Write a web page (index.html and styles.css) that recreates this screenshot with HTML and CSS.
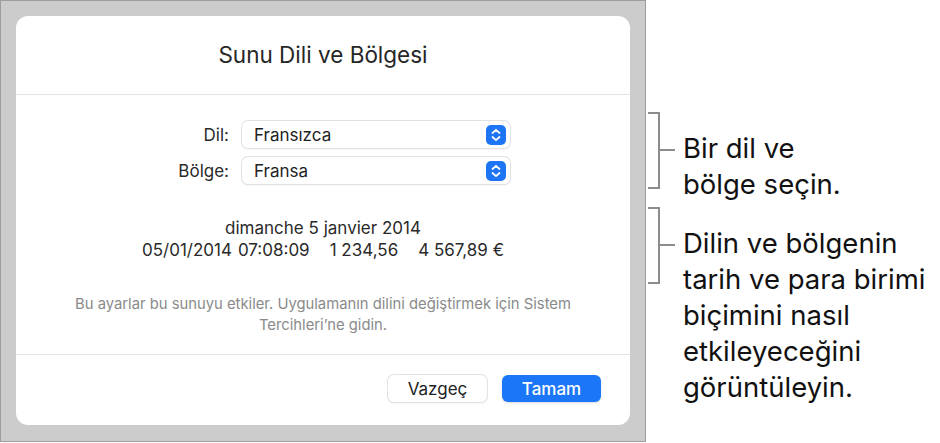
FILE: index.html
```html
<!DOCTYPE html>
<html lang="tr">
<head>
    <meta charset="UTF-8">
    <title>Sunu Dili ve Bölgesi</title>
    <link rel="stylesheet" href="styles.css">
</head>
<body>
    <div class="page">
        <div class="frame">
            <div class="dialog">
                <div class="dialog-head">Sunu Dili ve Bölgesi</div>

                <div class="fields">
                    <label class="field-label">Dil:</label>
                    <div class="popup">
                        <span>Fransızca</span>
                        <svg class="stepper" width="20" height="20" viewBox="0 0 20 20">
                            <rect width="20" height="20" rx="5" fill="#1d74f5"/>
                            <path d="M6.5 8 L10 4.8 L13.5 8" fill="none" stroke="#fff" stroke-width="1.8" stroke-linecap="round" stroke-linejoin="round"/>
                            <path d="M6.5 12 L10 15.2 L13.5 12" fill="none" stroke="#fff" stroke-width="1.8" stroke-linecap="round" stroke-linejoin="round"/>
                        </svg>
                    </div>
                    <label class="field-label">Bölge:</label>
                    <div class="popup">
                        <span>Fransa</span>
                        <svg class="stepper" width="20" height="20" viewBox="0 0 20 20">
                            <rect width="20" height="20" rx="5" fill="#1d74f5"/>
                            <path d="M6.5 8 L10 4.8 L13.5 8" fill="none" stroke="#fff" stroke-width="1.8" stroke-linecap="round" stroke-linejoin="round"/>
                            <path d="M6.5 12 L10 15.2 L13.5 12" fill="none" stroke="#fff" stroke-width="1.8" stroke-linecap="round" stroke-linejoin="round"/>
                        </svg>
                    </div>
                </div>

                <div class="preview">
                    <div>dimanche 5 janvier 2014</div>
                    <div class="preview-row">
                        <span>05/01/2014</span><span>07:08:09</span><span class="wide">1 234,56</span><span class="wide">4 567,89 €</span>
                    </div>
                </div>

                <p class="note">Bu ayarlar bu sunuyu etkiler. Uygulamanın dilini değiştirmek için Sistem<br>Tercihleri’ne gidin.</p>

                <div class="dialog-foot">
                    <button class="btn">Vazgeç</button>
                    <button class="btn btn-primary">Tamam</button>
                </div>
            </div>
        </div>

        <div class="callouts">
            <div class="callout">
                <div class="bracket"></div>
                <div class="callout-text">Bir dil ve<br>bölge seçin.</div>
            </div>
            <div class="callout">
                <div class="bracket"></div>
                <div class="callout-text">Dilin ve bölgenin<br>tarih ve para birimi<br>biçimini nasıl<br>etkileyeceğini<br>görüntüleyin.</div>
            </div>
        </div>
    </div>
</body>
</html>
```

FILE: styles.css
```css
body {
    margin: 0;
    padding: 0;
    font-family: Inter, Roboto, "Liberation Sans", sans-serif;
    background-color: #fff;
    color: #222;
}

.page {
    display: flex;
    align-items: flex-start;
}

.frame {
    width: 646px;
    height: 442px;
    box-sizing: border-box;
    padding: 15px 15px 16px 15px;
    background-color: #cccccc;
    border: 1px solid #9d9d9d;
    flex-shrink: 0;
}

.dialog {
    height: 100%;
    background-color: #fff;
    border-radius: 12px;
    display: flex;
    flex-direction: column;
}

.dialog-head {
    height: 78px;
    line-height: 78px;
    text-align: center;
    font-size: 22.5px;
    color: #262626;
    border-bottom: 1px solid #e4e4e4;
}

.fields {
    display: grid;
    grid-template-columns: 213px 268px;
    column-gap: 13px;
    row-gap: 9px;
    margin-top: 26px;
    align-items: center;
}

.field-label {
    text-align: right;
    font-size: 17px;
    color: #2a2a2a;
}

.popup {
    height: 27px;
    box-sizing: border-box;
    border-radius: 6px;
    background-color: #fff;
    box-shadow: 0 0 0 1px #e2e2e2, 0 1px 2px rgba(0, 0, 0, 0.12);
    display: flex;
    align-items: center;
    justify-content: space-between;
    padding: 0 4px 0 12px;
    font-size: 17px;
    color: #222;
}

.stepper {
    display: block;
}

.preview {
    margin-top: 33px;
    text-align: center;
    font-size: 17px;
    line-height: 22px;
    color: #2a2a2a;
}

.preview-row {
    display: flex;
    justify-content: center;
    gap: 6px;
}

.preview-row .wide {
    margin-left: 14px;
}

.note {
    margin: 33px 0 0 0;
    text-align: center;
    font-size: 14.8px;
    line-height: 21px;
    color: #8a8a8a;
}

.dialog-foot {
    margin-top: auto;
    height: 71px;
    box-sizing: border-box;
    border-top: 1px solid #e4e4e4;
    display: flex;
    justify-content: flex-end;
    align-items: flex-start;
    gap: 15px;
    padding: 20px 29px 0 0;
}

.btn {
    width: 99px;
    height: 27px;
    border: none;
    border-radius: 6px;
    background-color: #fff;
    box-shadow: 0 0 0 1px #e2e2e2, 0 1px 2px rgba(0, 0, 0, 0.12);
    font-family: inherit;
    font-size: 17px;
    color: #222;
    padding: 0;
}

.btn-primary {
    background-color: #1b77f7;
    box-shadow: 0 1px 2px rgba(0, 0, 0, 0.15);
    color: #fff;
    font-weight: 500;
}

.callouts {
    padding-top: 112px;
    margin-left: 2px;
    display: flex;
    flex-direction: column;
    gap: 5px;
}

.callout {
    display: flex;
    align-items: flex-start;
}

.bracket {
    position: relative;
    width: 10px;
    height: 73px;
    border: 2px solid #8c8c8c;
    border-left: none;
    flex-shrink: 0;
}

.bracket::after {
    content: "";
    position: absolute;
    left: 10px;
    top: 35px;
    width: 17px;
    height: 2px;
    background-color: #8c8c8c;
}

.callout-text {
    margin: 18px 0 0 23px;
    font-size: 27.5px;
    line-height: 36px;
    color: #111;
}
```
